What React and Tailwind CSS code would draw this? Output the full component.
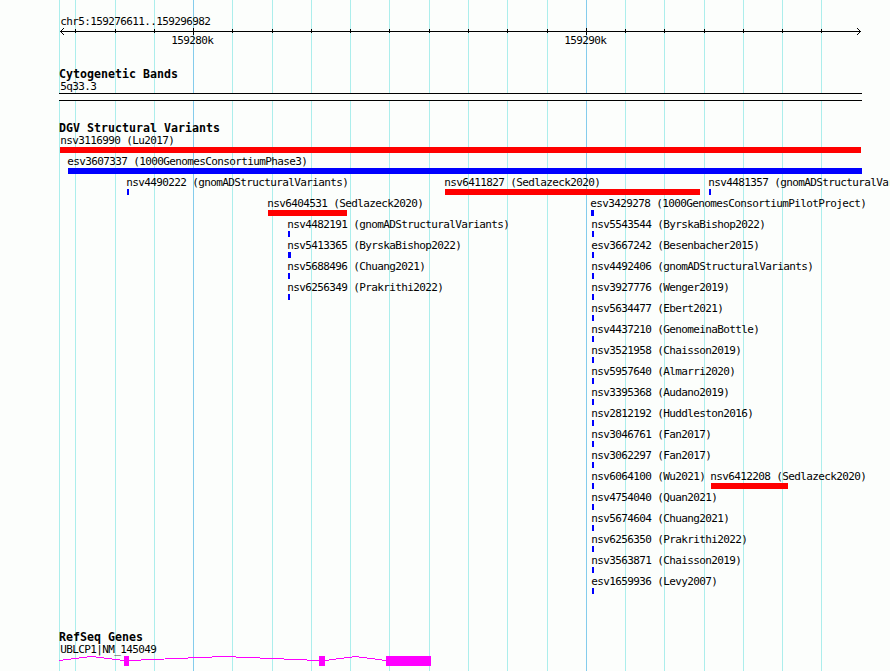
const GRID = [59, 75, 115, 154, 193, 232, 272, 311, 350, 389, 429, 468, 507, 547, 586, 625, 664, 704, 743, 782, 821];
const MAJOR = [193, 586];

// Each lane holds features as [label, start, width, colour, label shift]
const R = 'bg-[#ff0000]';
const B = 'bg-[#0000ff]';
const LANES = [
  [['nsv3116990 (Lu2017)', 60, 801, R, 1]],
  [['esv3607337 (1000GenomesConsortiumPhase3)', 68, 794, B]],
  [
    ['nsv4490222 (gnomADStructuralVariants)', 127, 2, B],
    ['nsv6411827 (Sedlazeck2020)', 445, 255, R],
    ['nsv4481357 (gnomADStructuralVariants)', 709, 2, B],
  ],
  [
    ['nsv6404531 (Sedlazeck2020)', 268, 79, R],
    ['esv3429278 (1000GenomesConsortiumPilotProject)', 591, 3, B],
  ],
  [['nsv4482191 (gnomADStructuralVariants)', 288, 2, B], ['nsv5543544 (ByrskaBishop2022)', 592, 2, B]],
  [['nsv5413365 (ByrskaBishop2022)', 288, 3, B], ['esv3667242 (Besenbacher2015)', 592, 2, B]],
  [['nsv5688496 (Chuang2021)', 288, 2, B], ['nsv4492406 (gnomADStructuralVariants)', 592, 2, B]],
  [['nsv6256349 (Prakrithi2022)', 288, 2, B], ['nsv3927776 (Wenger2019)', 592, 2, B]],
  [['nsv5634477 (Ebert2021)', 592, 2, B]],
  [['nsv4437210 (GenomeinaBottle)', 592, 2, B]],
  [['nsv3521958 (Chaisson2019)', 592, 2, B]],
  [['nsv5957640 (Almarri2020)', 592, 2, B]],
  [['nsv3395368 (Audano2019)', 592, 2, B]],
  [['nsv2812192 (Huddleston2016)', 592, 2, B]],
  [['nsv3046761 (Fan2017)', 592, 2, B]],
  [['nsv3062297 (Fan2017)', 592, 2, B]],
  [['nsv6064100 (Wu2021)', 592, 2, B], ['nsv6412208 (Sedlazeck2020)', 711, 77, R]],
  [['nsv4754040 (Quan2021)', 592, 2, B]],
  [['nsv5674604 (Chuang2021)', 592, 2, B]],
  [['nsv6256350 (Prakrithi2022)', 592, 2, B]],
  [['nsv3563871 (Chaisson2019)', 592, 2, B]],
  [['esv1659936 (Levy2007)', 592, 2, B]],
];

function Label({ children }) {
  return (
    <div className="h-[14px] whitespace-pre pl-[0.3px] text-[11px] leading-[16px] tracking-[-0.622px]">{children}</div>
  );
}

function Title({ children }) {
  return (
    <h2 className="ml-[59px] h-[12px] whitespace-pre text-[11.6px] font-bold leading-[12px] tracking-[0.016px]">
      {children}
    </h2>
  );
}

function Feature({ label, x, width, color, shift = 0 }) {
  return (
    <div className="col-start-1 row-start-1" style={{ marginLeft: x }}>
      <div className="-ml-px">
        <div style={{ paddingLeft: shift }}>
          <Label>{label}</Label>
        </div>
      </div>
      <div className={`h-[6px] ${color}`} style={{ width }} />
    </div>
  );
}

function GridLines() {
  return (
    <svg className="absolute inset-0" width="890" height="671" shapeRendering="crispEdges">
      {GRID.map((x) => (
        <rect key={x} x={x} y="0" width="1" height="671" fill={MAJOR.includes(x) ? '#84ccec' : '#aceeec'} />
      ))}
    </svg>
  );
}

function Ruler() {
  return (
    <svg className="block" width="890" height="7" shapeRendering="crispEdges">
      <rect x="60" y="3" width="801" height="1" />
      {GRID.slice(1).map((x) =>
        MAJOR.includes(x) ? (
          <rect key={x} x={x} y="0" width="1" height="7" />
        ) : (
          <rect key={x} x={x} y="1" width="1" height="4" />
        ),
      )}
      {[1, 2, 3].map((d) => (
        <g key={d}>
          <rect x={60 + d} y={3 - d} width="1" height="1" />
          <rect x={60 + d} y={3 + d} width="1" height="1" />
          <rect x={860 - d} y={3 - d} width="1" height="1" />
          <rect x={860 - d} y={3 + d} width="1" height="1" />
        </g>
      ))}
    </svg>
  );
}

function Gene() {
  return (
    <svg className="block" width="890" height="15" shapeRendering="crispEdges" fill="#ff00ff">
      <g fill="none" stroke="#ff00ff" strokeWidth="1">
        <polyline points="59,4.5 91.5,0.5 124,4.5" />
        <polyline points="129,4.5 224,0.5 319,4.5" />
        <polyline points="325,4.5 355.5,0.5 386,4.5" />
      </g>
      <rect x="124" y="0" width="5" height="10" />
      <rect x="319" y="0" width="6" height="10" />
      <rect x="386" y="0" width="45" height="10" />
    </svg>
  );
}

export default function App() {
  return (
    <div className="relative h-[671px] w-[890px] overflow-hidden bg-[#fcfefc] font-['DejaVu_Sans_Mono',monospace] text-black">
      <GridLines />
      <main className="relative flex flex-col">
        <section className="h-[68px] pt-[14px]">
          <div className="ml-[60px]"><Label>{'chr5:159276611..159296982'}</Label></div>
          <Ruler />
          <div className="-mt-[2px] flex">
            <div className="ml-[171px] w-[393px]"><Label>159280k</Label></div>
            <Label>159290k</Label>
          </div>
        </section>
        <section className="h-[54px]">
          <Title>Cytogenetic Bands</Title>
          <div className="-mt-px ml-[60px]"><Label>5q33.3</Label></div>
          <div className="ml-[59px] h-[8px] w-[803px] border-y border-black bg-[#fcfefc]" />
        </section>
        <section className="h-[509px]">
          <Title>DGV Structural Variants</Title>
          <div className="-mt-px">
            {LANES.map((lane, i) => (
              <div key={i} className="grid h-[21px] grid-cols-[890px]">
                {lane.map(([label, x, width, color, shift]) => (
                  <Feature key={label} label={label} x={x} width={width} color={color} shift={shift} />
                ))}
              </div>
            ))}
          </div>
        </section>
        <section>
          <Title>RefSeq Genes</Title>
          <div className="-mt-px ml-[60px]"><Label>UBLCP1|NM_145049</Label></div>
          <Gene />
        </section>
      </main>
    </div>
  );
}
